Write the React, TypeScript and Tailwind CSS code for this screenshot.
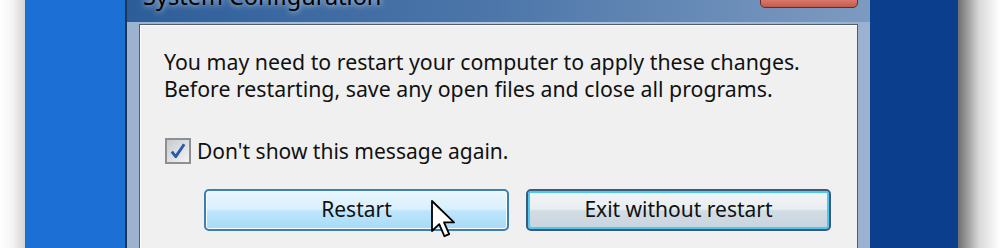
export default function App() {
  return (
    <div className="flex h-[248px] w-[1000px] overflow-hidden font-['Noto_Sans',sans-serif]">
      {/* left desktop edge */}
      <div className="w-[25px] shrink-0 bg-gradient-to-r from-white via-[#f4f4f4] to-[#d4d4d4]" />
      <div className="w-[100px] shrink-0 bg-[#1c6fd4]" />

      {/* window */}
      <div className="flex w-[745px] shrink-0 flex-col border-l-2 border-[#1d3554] bg-gradient-to-r from-[#9cb3cf] via-[#b7c8dc] to-[#9ab2cf]">
        {/* title bar */}
        <div className="relative h-[22px] shrink-0 overflow-hidden bg-gradient-to-r from-[#2d5d99] via-[#4d77aa] to-[#7d9bc1]">
          <div className="absolute left-[16px] top-[-15px] whitespace-nowrap text-[23.5px] leading-[22px] text-black [text-shadow:0_0_6px_rgba(255,255,255,0.9)]">
            System Configuration
          </div>
          <div className="absolute right-[12px] top-[-4px] h-[12px] w-[98px] rounded-b-[5px] border border-[#6b2a22] bg-gradient-to-b from-[#e1857a] to-[#c35a4c]" />
        </div>

        {/* frame around content */}
        <div className="flex flex-1 px-[12px] pt-[2px]">
          <div className="flex-1 border border-b-0 border-[#4d5e70] bg-[#f0f0f0] shadow-[inset_1px_1px_0_#ffffff]">
            <p className="whitespace-nowrap pl-[24px] pt-[23px] text-[21.3px] leading-[27px] text-[#111]">
              You may need to restart your computer to apply these changes.
              <br />
              Before restarting, save any open files and close all programs.
            </p>

            <div className="mt-[36px] flex h-[26px] items-center gap-[6px] pl-[25px]">
              <div className="flex h-[26px] w-[26px] items-center justify-center border-2 border-[#8e8f8f] bg-gradient-to-br from-[#c6cbd2] to-[#f4f4f4]">
                <svg width="18" height="18" viewBox="0 0 16 16">
                  <path d="M2.5 8.5 L6 13 L13.5 2" fill="none" stroke="#2a5ca8" strokeWidth="2.6" strokeLinejoin="round" />
                </svg>
              </div>
              <span className="whitespace-nowrap text-[21px] leading-[26px] text-[#111]">Don't show this message again.</span>
            </div>

            <div className="mt-[25px] flex gap-[17px] pl-[64px]">
              <div className="relative">
                <button className="h-[42px] w-[305px] rounded-[5px] border-2 border-[#3c7fb1] text-[21px] text-[#111] shadow-[inset_0_0_0_1px_#f8fcfe] [background:linear-gradient(#eaf6fd_0%,#d9f0fc_48%,#bee6fd_52%,#a7d9f5_100%)]">
                  Restart
                </button>
                <svg className="absolute left-[226px] top-[10px]" width="28" height="42" viewBox="0 0 14 21">
                  <path
                    d="M1 1 L1 16 L4.6 12.6 L7.2 18.6 L9.6 17.6 L7 11.7 L12 11.7 Z"
                    fill="#ffffff"
                    stroke="#000000"
                    strokeWidth="0.9"
                    strokeLinejoin="round"
                  />
                </svg>
              </div>
              <button className="h-[42px] w-[305px] rounded-[5px] border-2 border-[#3d5b78] text-[21px] text-[#111] shadow-[inset_0_0_0_2px_#4cc8f4] [background:linear-gradient(#f3f6f8_0%,#e8edf1_48%,#d2dce4_52%,#c8d4de_100%)]">
                Exit without restart
              </button>
            </div>
          </div>
        </div>
      </div>

      <div className="w-[88px] shrink-0 bg-[#0b3e8d]" />
      <div className="flex-1 bg-gradient-to-r from-[#6f6f6f] via-[#d8d8d8] to-white" />
    </div>
  );
}
